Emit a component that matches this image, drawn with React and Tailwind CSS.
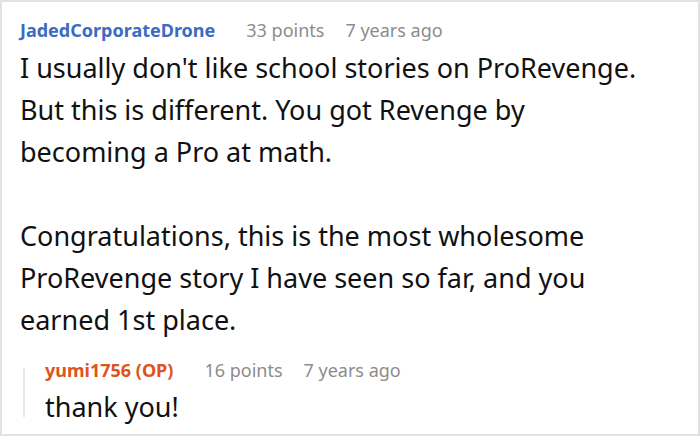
export default function App() {
  return (
    <div className="w-[700px] h-[436px] bg-white border-2 border-[#e2e2e2] font-['Noto_Sans',sans-serif] overflow-hidden">
      <div className="pl-[18px] pt-[14px]">
        <div className="flex items-baseline text-[18px] leading-[28px]">
          <span className="font-bold text-[#3b6bc2]">JadedCorporateDrone</span>
          <span className="ml-[31px] text-[#8c8c8c]">33 points</span>
          <span className="ml-[21px] text-[#8c8c8c]">7 years ago</span>
        </div>
        <div className="text-[27px] leading-[42px] text-[#111] mt-[3px]">
          <p>I usually don't like school stories on ProRevenge.</p>
          <p>But this is different. You got Revenge by</p>
          <p>becoming a Pro at math.</p>
          <p className="h-[42px]"></p>
          <p>Congratulations, this is the most wholesome</p>
          <p>ProRevenge story I have seen so far, and you</p>
          <p>earned 1st place.</p>
        </div>
        <div className="mt-[15px] pl-[25px] relative">
          <div className="absolute left-[3px] top-[12px] h-[49px] w-[2px] bg-[#e6e6e6]"></div>
          <div className="flex items-baseline text-[18px] leading-[28px]">
            <span className="font-bold text-[#dd5420]">yumi1756 (OP)</span>
            <span className="ml-[31px] text-[#8c8c8c]">16 points</span>
            <span className="ml-[21px] text-[#8c8c8c]">7 years ago</span>
          </div>
          <p className="text-[27px] leading-[38px] text-[#111] mt-[4px]">thank you!</p>
        </div>
      </div>
    </div>
  );
}
